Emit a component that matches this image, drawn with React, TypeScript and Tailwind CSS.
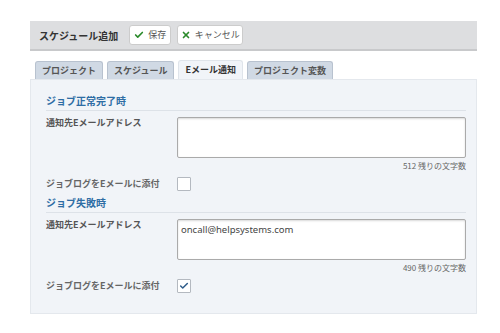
import { Check, X } from "lucide-react";

const font = { fontFamily: '"Noto Sans CJK JP", "Noto Sans", sans-serif' };

function Section({
  title,
  value,
  remaining,
  checked,
}: {
  title: string;
  value: string;
  remaining: number;
  checked: boolean;
}) {
  return (
    <div>
      <div className="border-b border-[#dde2e8] pb-[1px] text-[10px] leading-[16px] font-bold text-[#2e6da4]">
        {title}
      </div>
      <div className="flex mt-[6px]">
        <div className="w-[131px] pt-[1px] text-[9px] leading-[10px] font-semibold text-[#555]">
          通知先Eメールアドレス
        </div>
        <div className="flex-1">
          <div
            className="h-[41px] bg-white border border-[#aaa] rounded-[2px] shadow-[inset_0_1px_2px_rgba(0,0,0,0.15)] px-[3px] pt-[3px] text-[9.5px] leading-[14px] text-[#444]"
            style={{ fontFamily: '"Noto Sans", sans-serif' }}
          >
            {value}
          </div>
          <div className="text-right text-[8px] leading-[12px] mt-[2px] text-[#666]">
            {remaining} 残りの文字数
          </div>
        </div>
      </div>
      <div className="flex items-center mt-[5px]">
        <div className="w-[131px] text-[9px] leading-[14px] font-semibold text-[#666]">
          ジョブログをEメールに添付
        </div>
        <div className="w-[14px] h-[14px] bg-white border border-[#b4b9c0] rounded-[1px] flex items-center justify-center">
          {checked && <Check className="w-[10px] h-[10px] text-[#2e5c8a]" strokeWidth={3.5} />}
        </div>
      </div>
    </div>
  );
}

export default function App() {
  const tabs = ["プロジェクト", "スケジュール", "Eメール通知", "プロジェクト変数"];
  return (
    <div className="w-[500px] h-[333px] bg-white pt-[21px] pl-[30px]" style={font}>
      <div className="w-[447px]">
        <div className="h-[30px] bg-[#dddee0] border-b-2 border-[#c8c9cb] flex items-center pl-[9px] gap-[11px]">
          <span className="text-[10px] font-bold text-[#333]">スケジュール追加</span>
          <div className="flex gap-[6px]">
            <button className="h-[20px] w-[42px] bg-white border border-[#ccc] rounded-[3px] flex items-center justify-center gap-[4px] text-[9px] text-[#555]">
              <Check className="w-[10px] h-[10px] text-[#2a8a2a]" strokeWidth={4} />
              保存
            </button>
            <button className="h-[20px] w-[66px] bg-white border border-[#ccc] rounded-[3px] flex items-center justify-center gap-[4px] text-[9px] text-[#555]">
              <X className="w-[10px] h-[10px] text-[#2a8a2a]" strokeWidth={4} />
              キャンセル
            </button>
          </div>
        </div>
        <div className="flex gap-[4px] pl-[5px] mt-[9px] h-[19px] items-end">
          {tabs.map((t, i) => (
            <div
              key={t}
              className={
                i === 2
                  ? "h-[19px] px-[6px] bg-[#f1f4f8] border border-b-0 border-[#dfe4ea] rounded-t-[3px] text-[9px] leading-[18px] font-semibold text-[#333]"
                  : "h-[18px] px-[6px] bg-[#d0d9e4] border border-b-0 border-[#b8c2cf] rounded-t-[3px] text-[9px] leading-[18px] font-semibold text-[#555]"
              }
            >
              {t}
            </div>
          ))}
        </div>
        <div className="h-[235px] bg-[#f1f4f8] border border-[#e4e8ed] pl-[15px] pr-[10px] pt-[13px]">
          <Section title="ジョブ正常完了時" value="" remaining={512} checked={false} />
          <div className="mt-[4px]">
            <Section title="ジョブ失敗時" value="oncall@helpsystems.com" remaining={490} checked={true} />
          </div>
        </div>
      </div>
    </div>
  );
}
